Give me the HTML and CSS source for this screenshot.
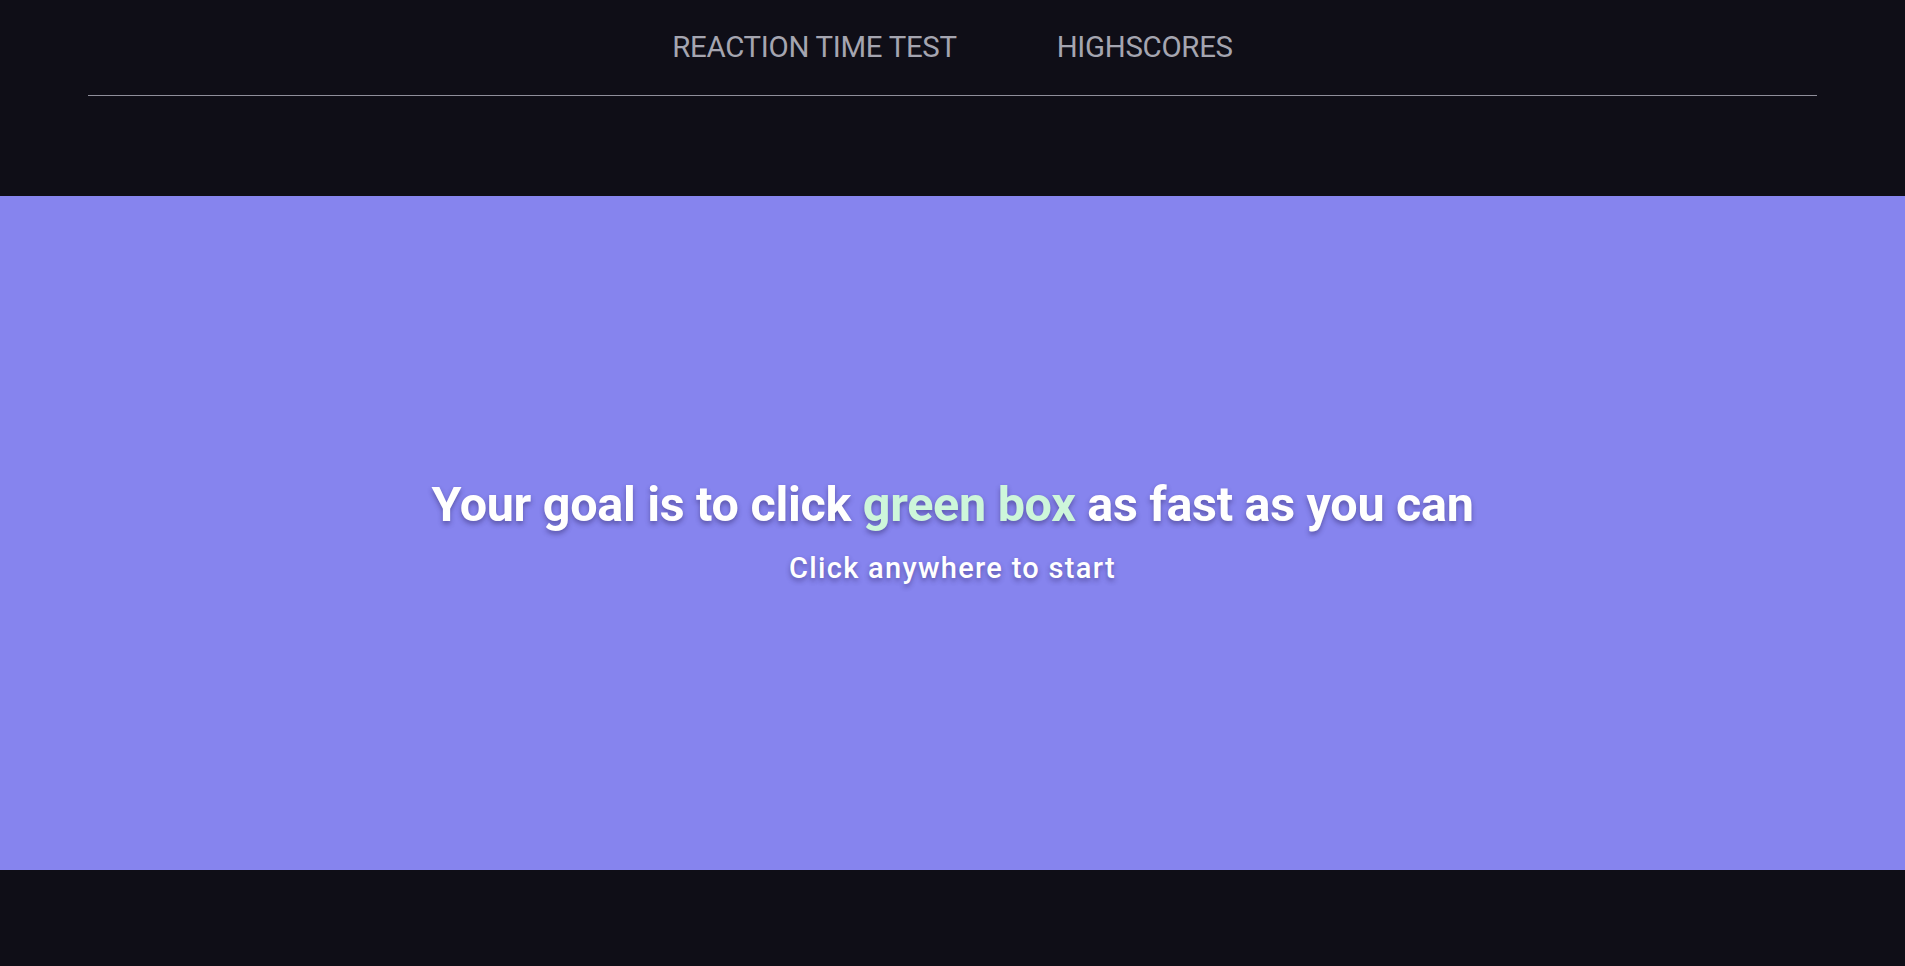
FILE: index.html
```html
<!DOCTYPE html>
<html lang="en">
<head>
<meta charset="utf-8">
<title>Reaction Time Test</title>
<link rel="stylesheet" href="styles.css">
</head>
<body>
  <header class="header">
    <nav class="nav">
      <a class="nav-link" href="#">REACTION TIME TEST</a>
      <a class="nav-link" href="#">HIGHSCORES</a>
    </nav>
  </header>
  <main class="stage">
    <h1 class="title">Your goal is to click <span class="green">green box</span> as fast as you can</h1>
    <p class="subtitle">Click anywhere to start</p>
  </main>
</body>
</html>
```

FILE: styles.css
```css
html, body {
  margin: 0;
  padding: 0;
}
body {
  background: #0f0e17;
  font-family: "Roboto", "DejaVu Sans", sans-serif;
  height: 966px;
  overflow: hidden;
}
.header {
  height: 196px;
  padding: 0 88px;
  box-sizing: border-box;
}
.nav {
  display: flex;
  justify-content: center;
  gap: 100px;
  height: 96px;
  align-items: center;
  border-bottom: 1px solid #8f8e9a;
  box-sizing: border-box;
  padding-bottom: 2px;
}
.nav-link {
  color: #a5a5b0;
  text-decoration: none;
  font-size: 29.4px;
  letter-spacing: -0.3px;
}
.stage {
  background: #8684ee;
  height: 674px;
  display: flex;
  flex-direction: column;
  align-items: center;
  justify-content: center;
  padding-bottom: 6px;
  box-sizing: border-box;
}
.title {
  margin: 0;
  color: #fffffe;
  font-size: 48.5px;
  font-weight: 700;
  letter-spacing: -0.3px;
  text-shadow: 0 3px 5px rgba(40, 30, 90, 0.45);
}
.green {
  color: #cdf6da;
}
.subtitle {
  margin: 18px 0 0;
  color: #fffffe;
  font-size: 29px;
  font-weight: 500;
  letter-spacing: 1.3px;
  text-shadow: 0 3px 5px rgba(40, 30, 90, 0.45);
}
```
